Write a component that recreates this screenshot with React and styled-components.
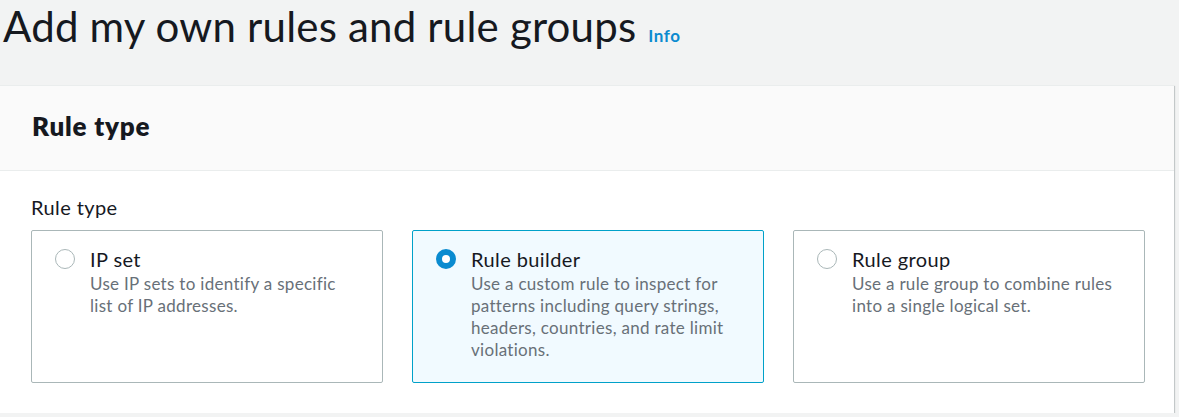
import React, { useState } from 'react'
import styled, { createGlobalStyle } from 'styled-components'

const GlobalStyle = createGlobalStyle`
    body {
        margin: 0;
        background-color: #f2f3f3;
        font-family: Lato, "Open Sans", sans-serif;
        color: #16191f;
    }
`

const Page = styled.div`
    width: 1174px;
`

const TitleRow = styled.div`
    display: flex;
    align-items: baseline;
    gap: 12px;
    padding: 1px 0 0 3px;
    height: 50px;
    margin-bottom: 34px;

    h1 {
        margin: 0;
        font-size: 42px;
        line-height: 50px;
        font-weight: 400;
        letter-spacing: 0.2px;
    }

    a {
        font-size: 17px;
        font-weight: 700;
        letter-spacing: 0.6px;
        color: #0a8bd0;
        text-decoration: none;
    }
`

const Panel = styled.section`
    background: #ffffff;
    border-top: 1px solid #eaeded;
    box-shadow: 0 1px 1px 0 rgba(0, 28, 36, 0.3), 1px 1px 1px 0 rgba(0, 28, 36, 0.15),
        -1px 1px 1px 0 rgba(0, 28, 36, 0.15);
`

const PanelHeader = styled.header`
    background: #fafafa;
    border-bottom: 1px solid #eaeded;
    padding: 24px 32px 28px;

    h2 {
        margin: 0;
        font-size: 26px;
        line-height: 32px;
        font-weight: 800;
        letter-spacing: 0.8px;
    }
`

const PanelBody = styled.div`
    padding: 24px 29px 30px 31px;
`

const Label = styled.div`
    font-size: 20px;
    line-height: 24px;
    letter-spacing: 0.4px;
    margin-bottom: 11px;
`

const Tiles = styled.div`
    display: grid;
    grid-template-columns: repeat(3, 1fr);
    gap: 29px;
`

const Tile = styled.label`
    display: flex;
    gap: 15px;
    box-sizing: border-box;
    min-height: 153px;
    padding: 16px 26px 16px 23px;
    border: 1px solid ${(p) => (p.$selected ? '#00a1c9' : '#aab7b8')};
    border-radius: 2px;
    background: ${(p) => (p.$selected ? '#f1faff' : '#ffffff')};
    cursor: pointer;
`

const RadioWrap = styled.span`
    display: flex;
    align-items: center;
    height: 24px;
    flex-shrink: 0;
`

const Radio = styled.span`
    box-sizing: border-box;
    width: 20px;
    height: 20px;
    border-radius: 50%;
    border: ${(p) => (p.$checked ? '6px solid #0a8bd0' : '1.5px solid #aab7b8')};
    background: #ffffff;
`

const TileText = styled.span`
    display: flex;
    flex-direction: column;

    strong {
        font-size: 20px;
        line-height: 24px;
        font-weight: 400;
        letter-spacing: 0.4px;
        color: #16191f;
    }

    span {
        margin-top: 2px;
        font-size: 17px;
        line-height: 22px;
        letter-spacing: 0.3px;
        color: #687078;
    }
`

const options = [
    { id: 'ip', title: 'IP set', desc: 'Use IP sets to identify a specific list of IP addresses.' },
    {
        id: 'builder',
        title: 'Rule builder',
        desc: 'Use a custom rule to inspect for patterns including query strings, headers, countries, and rate limit violations.',
    },
    { id: 'group', title: 'Rule group', desc: 'Use a rule group to combine rules into a single logical set.' },
]

function App() {
    const [selected, setSelected] = useState('builder')

    return (
        <Page>
            <GlobalStyle />
            <TitleRow>
                <h1>Add my own rules and rule groups</h1>
                <a href="#info">Info</a>
            </TitleRow>
            <Panel>
                <PanelHeader>
                    <h2>Rule type</h2>
                </PanelHeader>
                <PanelBody>
                    <Label>Rule type</Label>
                    <Tiles>
                        {options.map((o) => (
                            <Tile key={o.id} $selected={selected === o.id} onClick={() => setSelected(o.id)}>
                                <RadioWrap>
                                    <Radio $checked={selected === o.id} />
                                </RadioWrap>
                                <TileText>
                                    <strong>{o.title}</strong>
                                    <span>{o.desc}</span>
                                </TileText>
                            </Tile>
                        ))}
                    </Tiles>
                </PanelBody>
            </Panel>
        </Page>
    )
}

export default App
